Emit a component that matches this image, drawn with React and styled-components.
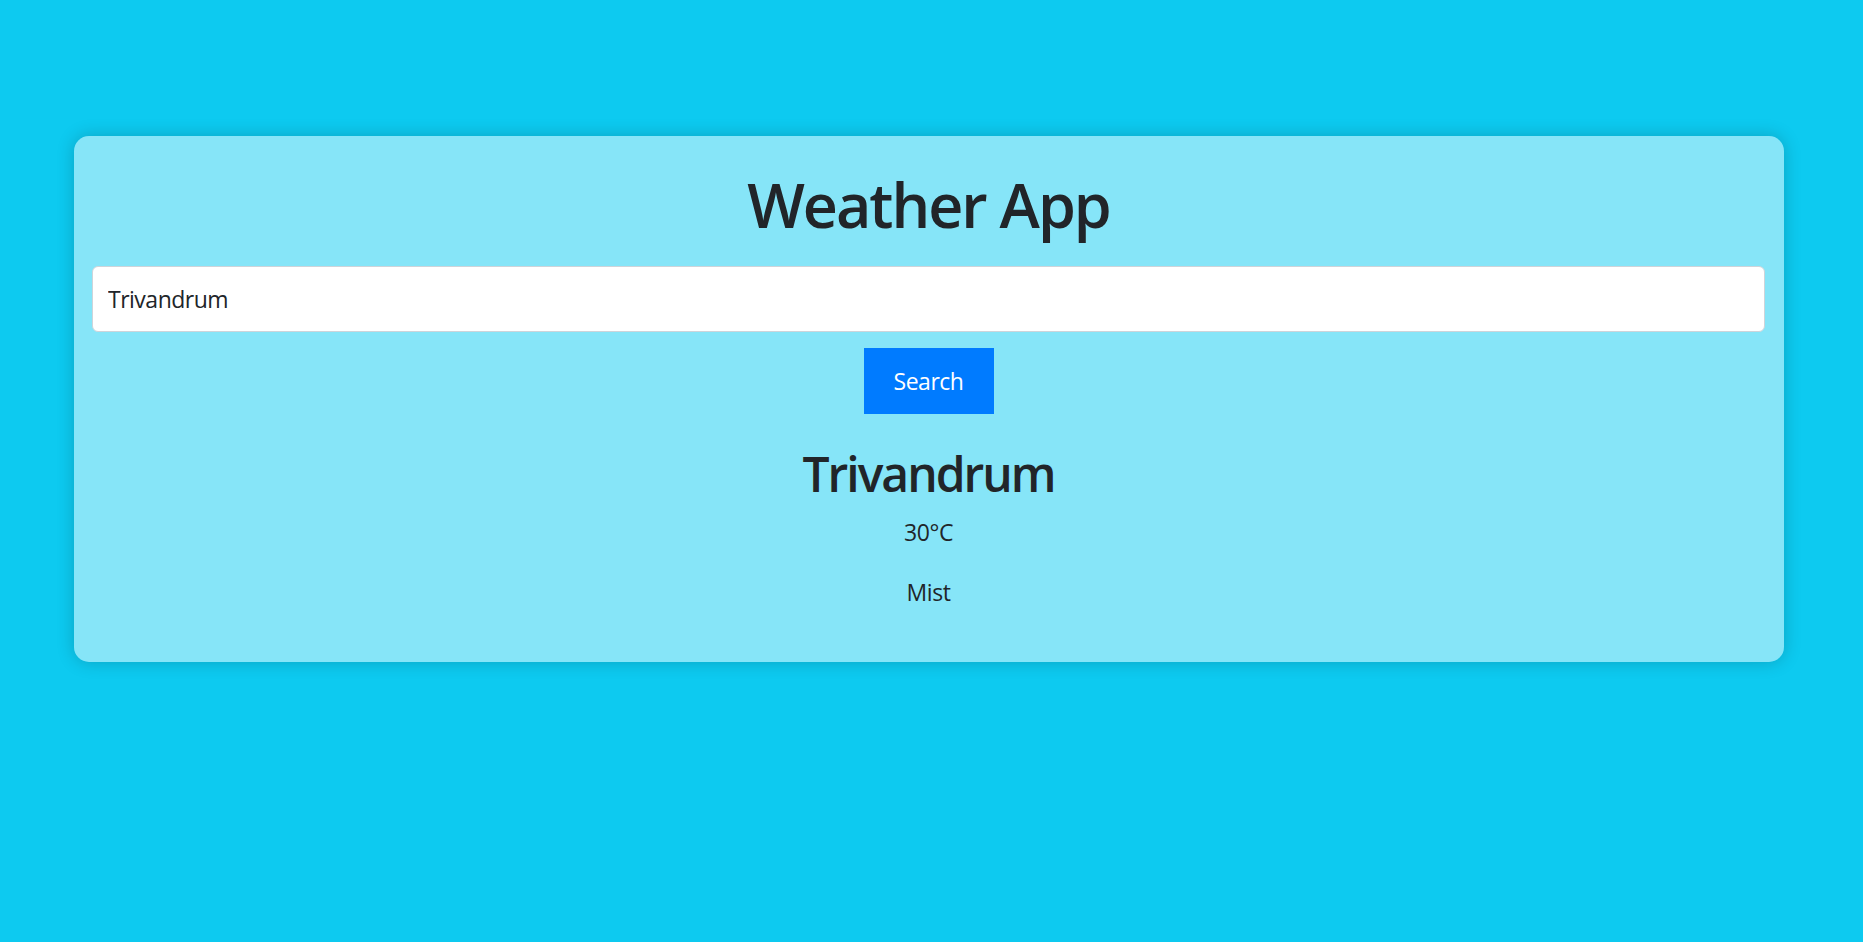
import React, { useState } from "react";
import styled, { createGlobalStyle } from "styled-components";

const GlobalStyle = createGlobalStyle`
  html, body {
    margin: 0;
    padding: 0;
    background-color: #0dcaf0;
    font-family: "Open Sans", "Noto Sans", sans-serif;
    color: #212529;
  }
`;

const Page = styled.div`
  min-height: 942px;
  box-sizing: border-box;
  padding: 136px 79px 0 74px;
`;

const Card = styled.div`
  box-sizing: border-box;
  background-color: rgba(255, 255, 255, 0.5);
  border-radius: 15px;
  box-shadow: 0 0 18px rgba(0, 0, 0, 0.2);
  padding: 30px 19px 28px 18px;
  display: flex;
  flex-direction: column;
  align-items: center;
`;

const Title = styled.h1`
  margin: 2px 0 24px;
  font-size: 61px;
  line-height: 74px;
  letter-spacing: -2px;
  font-weight: 600;
  color: #212529;
`;

const SearchInput = styled.input`
  box-sizing: border-box;
  width: 100%;
  height: 66px;
  padding: 0 15px;
  font-family: inherit;
  font-size: 23px;
  letter-spacing: -0.5px;
  color: #212529;
  background: #fff;
  border: 1px solid #ced4da;
  border-radius: 6px;
  outline: none;
`;

const SearchButton = styled.button`
  margin-top: 16px;
  width: 130px;
  height: 66px;
  border: none;
  border-radius: 0;
  background-color: #007bff;
  color: #fff;
  font-family: inherit;
  font-size: 23px;
  letter-spacing: -0.5px;
  cursor: pointer;
`;

const City = styled.h2`
  margin: 31px 0 11px;
  font-size: 48px;
  line-height: 58px;
  letter-spacing: -2px;
  font-weight: 600;
`;

const Info = styled.p`
  margin: 0 0 24px;
  font-size: 23px;
  line-height: 36px;
  letter-spacing: -0.4px;
`;

const App = () => {
  const [city, setCity] = useState("Trivandrum");

  return (
    <>
      <GlobalStyle />
      <Page>
        <Card>
          <Title>Weather App</Title>
          <SearchInput value={city} onChange={(e) => setCity(e.target.value)} />
          <SearchButton>Search</SearchButton>
          <City>Trivandrum</City>
          <Info>30°C</Info>
          <Info>Mist</Info>
        </Card>
      </Page>
    </>
  );
};

export default App;
